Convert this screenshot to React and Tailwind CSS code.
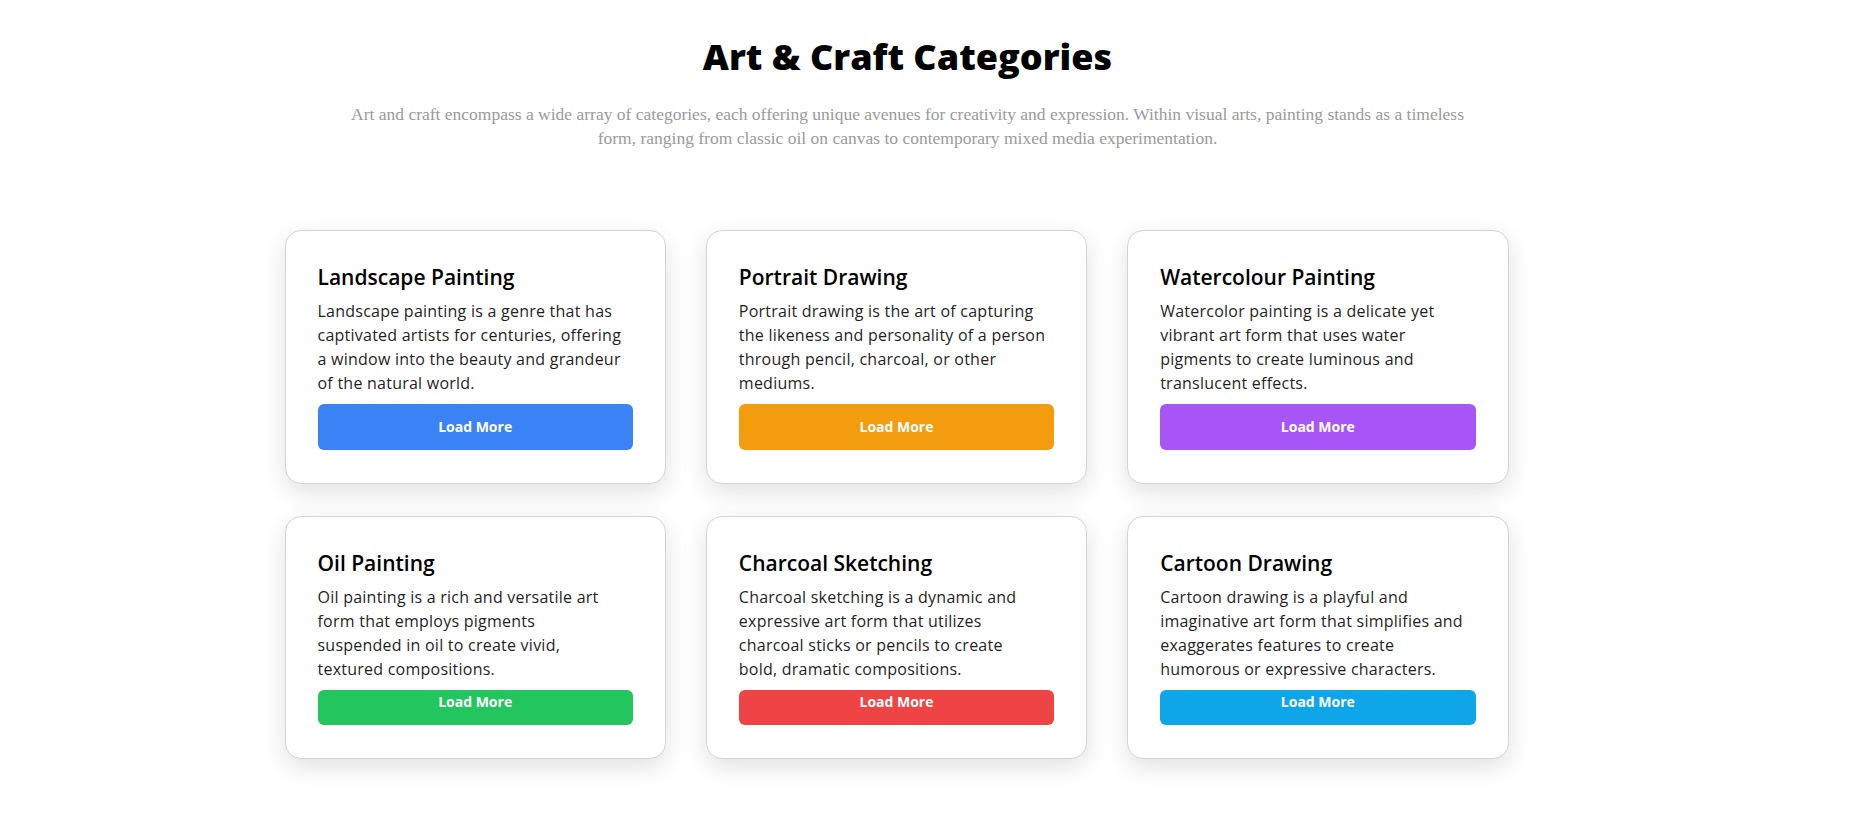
const categories = [
  {
    title: 'Landscape Painting',
    lines: [
      'Landscape painting is a genre that has',
      'captivated artists for centuries, offering',
      'a window into the beauty and grandeur',
      'of the natural world.',
    ],
    color: 'bg-[#3b82f6]',
  },
  {
    title: 'Portrait Drawing',
    lines: [
      'Portrait drawing is the art of capturing',
      'the likeness and personality of a person',
      'through pencil, charcoal, or other',
      'mediums.',
    ],
    color: 'bg-[#f39c0d]',
  },
  {
    title: 'Watercolour Painting',
    lines: [
      'Watercolor painting is a delicate yet',
      'vibrant art form that uses water',
      'pigments to create luminous and',
      'translucent effects.',
    ],
    color: 'bg-[#a855f7]',
  },
  {
    title: 'Oil Painting',
    lines: [
      'Oil painting is a rich and versatile art',
      'form that employs pigments',
      'suspended in oil to create vivid,',
      'textured compositions.',
    ],
    color: 'bg-[#22c55e]',
  },
  {
    title: 'Charcoal Sketching',
    lines: [
      'Charcoal sketching is a dynamic and',
      'expressive art form that utilizes',
      'charcoal sticks or pencils to create',
      'bold, dramatic compositions.',
    ],
    color: 'bg-[#ef4444]',
  },
  {
    title: 'Cartoon Drawing',
    lines: [
      'Cartoon drawing is a playful and',
      'imaginative art form that simplifies and',
      'exaggerates features to create',
      'humorous or expressive characters.',
    ],
    color: 'bg-[#0ea5e9]',
  },
];

const CategoryCard = ({ title, lines, color, compact }) => (
  <div className="bg-white border border-[#d4d4d4] rounded-2xl px-8 pt-8 pb-[33px] shadow-[0_8px_24px_rgba(0,0,0,0.12)]">
    {/* Title */}
    <h3 className="text-[21px] leading-7 font-semibold text-black">{title}</h3>

    {/* Description */}
    <p className="mt-2 text-base leading-6 tracking-[0.015em] whitespace-nowrap text-[#1f1f1f]">
      {lines.map((line, i) => (
        <span key={i}>
          {line}
          {i < lines.length - 1 && <br />}
        </span>
      ))}
    </p>

    {/* Button */}
    <button
      className={`mt-[9px] w-full rounded-md text-white text-sm leading-5 font-bold flex justify-center ${color} ${
        compact ? 'h-[35px] items-start pt-[2px]' : 'h-[46px] items-center'
      }`}
    >
      Load More
    </button>
  </div>
);

export default function App() {
  return (
    <div className="min-h-screen bg-white font-['Open_Sans',sans-serif] pt-[37px] pb-16">
      <div className="w-[1280px] mx-auto">
        {/* Header */}
        <div className="w-[1246px] flex flex-col items-center text-center">
          <h1 className="text-4xl leading-10 font-extrabold text-black">Art &amp; Craft Categories</h1>
          <p className="mt-[25px] font-['Liberation_Serif',serif] text-[17.5px] leading-6 text-[#9a9a9a]">
            Art and craft encompass a wide array of categories, each offering unique avenues for creativity and expression. Within visual arts, painting stands as a timeless
            <br />
            form, ranging from classic oil on canvas to contemporary mixed media experimentation.
          </p>
        </div>

        {/* Cards */}
        <div className="mt-20 w-[1224px] grid grid-cols-3 gap-x-10 gap-y-8">
          {categories.map((c, i) => (
            <CategoryCard key={c.title} {...c} compact={i >= 3} />
          ))}
        </div>
      </div>
    </div>
  );
}
